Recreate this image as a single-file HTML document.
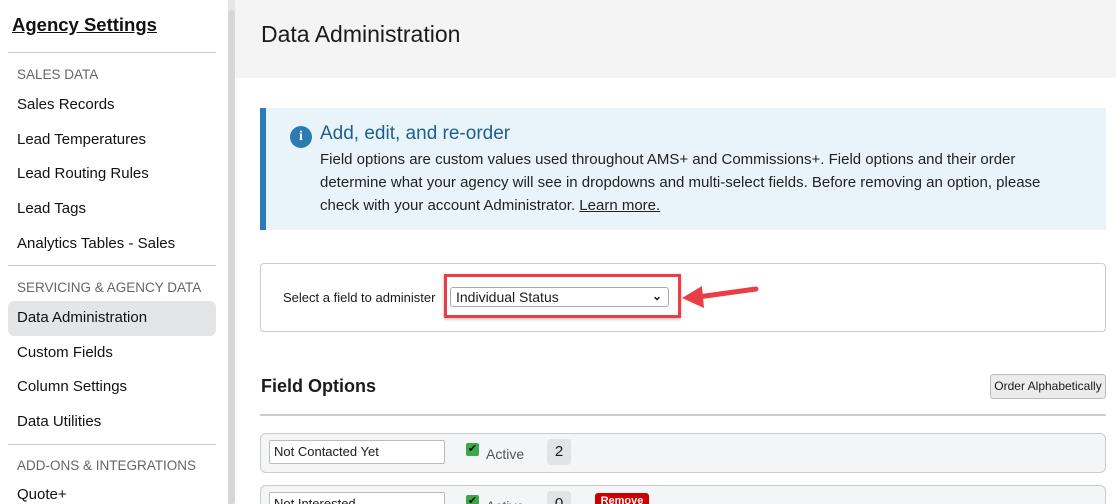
<!DOCTYPE html>
<html><head><style>
*{margin:0;padding:0;box-sizing:border-box}
html,body{width:1116px;height:504px;overflow:hidden}
body{background:#fff;font-family:"Liberation Sans",sans-serif;color:#1b1b1b;position:relative}
.sb{position:absolute;left:0;top:0;width:228px;height:504px;background:#fff}
.sb h1{position:absolute;left:12px;top:14px;font-size:18.5px;font-weight:bold;text-decoration:underline;color:#111}
.hr{position:absolute;left:8px;width:208px;height:1px;background:#ccc}
.sec{position:absolute;left:17px;font-size:13.5px;color:#666}
.it{position:absolute;left:17px;font-size:15px;color:#111}
.act{position:absolute;left:8px;top:301px;width:208px;height:35px;background:#e4e5e7;border-radius:6px}
.scroll{position:absolute;left:228px;top:0;width:7px;height:504px;background:#e6e6e6}
.scroll div{position:absolute;left:0;top:10px;width:7px;height:494px;background:#d7d7d7;border-radius:3px}
.hdr{position:absolute;left:235px;top:0;width:881px;height:78px;background:#f4f4f5}
.hdr span{position:absolute;left:26px;top:21px;font-size:23px;color:#1b1b1b}
.info{position:absolute;left:260px;top:108px;width:846px;height:122px;background:#e9f4fa;border-left:6px solid #2a7cb3}
.ic{position:absolute;left:24px;top:18px;width:22px;height:22px;border-radius:50%;background:#2a7cb3;color:#fff;font:bold 14px "Liberation Serif",serif;text-align:center;line-height:22px}
.info h2{position:absolute;left:54px;top:15px;font-size:19px;font-weight:normal;color:#1d5f8e}
.info p{position:absolute;left:54px;top:40px;width:755px;font-size:15px;line-height:23px;color:#222}
.box{position:absolute;left:260px;top:263px;width:846px;height:69px;border:1px solid #ccc;border-radius:4px}
.lbl{position:absolute;left:283px;top:290px;font-size:13px}
.sel{position:absolute;left:450px;top:287px;width:219px;height:20px;border:1px solid #aaa;border-radius:3px;font-size:14px;padding:1px 5px}
.sel i{position:absolute;right:6px;top:1px;font-style:normal;font-size:12px;font-weight:bold}
.red{position:absolute;left:444px;top:274px;width:237px;height:44px;border:3px solid #ea3e47;box-shadow:0 1px 3px rgba(0,0,0,.3)}
.fo{position:absolute;left:261px;top:376px;font-size:18px;font-weight:bold}
.btn{position:absolute;left:990px;top:374px;width:116px;height:25px;border:1px solid #bbb;border-radius:3px;background:#ececec;font-size:12px;text-align:center;line-height:23px}
.line{position:absolute;left:260px;top:414px;width:846px;height:2px;background:#ccc}
.row{position:absolute;left:260px;width:846px;height:40px;background:#f4f5f7;border:1px solid #ccc;border-radius:6px}
.inp{position:absolute;left:8px;top:6px;width:176px;height:24px;background:#fff;border:1px solid #bbb;border-radius:2px;font-size:13px;padding:3px 4px}
.cb{position:absolute;left:205px;top:9px;width:13px;height:13px;background:#3ea64b;color:#111;font-size:11px;line-height:13px;text-align:center;border-radius:2px}
.ac{position:absolute;left:225px;top:12px;font-size:14px;color:#555}
.n{position:absolute;left:286px;top:5px;width:24px;height:26px;background:#e2e3e5;border-radius:4px;text-align:center;line-height:26px;font-size:15px}
.rm{position:absolute;left:334px;top:7px;width:54px;height:28px;background:#c00;border-radius:3px;color:#fff;font-size:11px;font-weight:bold;text-align:center;line-height:16px}
</style></head><body>
<div class="sb">
<h1>Agency Settings</h1>
<div class="hr" style="top:52px"></div>
<div class="sec" style="top:67px">SALES DATA</div>
<div class="it" style="top:96px">Sales Records</div>
<div class="it" style="top:131px">Lead Temperatures</div>
<div class="it" style="top:165px">Lead Routing Rules</div>
<div class="it" style="top:200px">Lead Tags</div>
<div class="it" style="top:235px">Analytics Tables - Sales</div>
<div class="hr" style="top:265px"></div>
<div class="sec" style="top:280px">SERVICING &amp; AGENCY DATA</div>
<div class="act"></div>
<div class="it" style="top:309px">Data Administration</div>
<div class="it" style="top:344px">Custom Fields</div>
<div class="it" style="top:378px">Column Settings</div>
<div class="it" style="top:413px">Data Utilities</div>
<div class="hr" style="top:444px"></div>
<div class="sec" style="top:458px">ADD-ONS &amp; INTEGRATIONS</div>
<div class="it" style="top:486px">Quote+</div>
</div>
<div class="scroll"><div></div></div>
<div class="hdr"><span>Data Administration</span></div>
<div class="info"><div class="ic">i</div><h2>Add, edit, and re-order</h2>
<p>Field options are custom values used throughout AMS+ and Commissions+. Field options and their order<br>determine what your agency will see in dropdowns and multi-select fields. Before removing an option, please<br>check with your account Administrator. <u>Learn more.</u></p></div>
<div class="box"></div>
<div class="lbl">Select a field to administer</div>
<div class="sel">Individual Status<i>&#8964;</i></div>
<div class="red"></div>
<svg style="position:absolute;left:680px;top:280px" width="80" height="30"><path d="M76 9 L18 17" stroke="#ea3e47" stroke-width="5" stroke-linecap="round"/><path d="M2 18 L22 6 L24 28 Z" fill="#ea3e47"/></svg>
<div class="fo">Field Options</div>
<div class="btn">Order Alphabetically</div>
<div class="line"></div>
<div class="row" style="top:433px"><div class="inp">Not Contacted Yet</div><div class="cb">✔</div><div class="ac">Active</div><div class="n">2</div></div>
<div class="row" style="top:485px"><div class="inp">Not Interested</div><div class="cb">✔</div><div class="ac">Active</div><div class="n">0</div><div class="rm">Remove</div></div>
</body></html>
